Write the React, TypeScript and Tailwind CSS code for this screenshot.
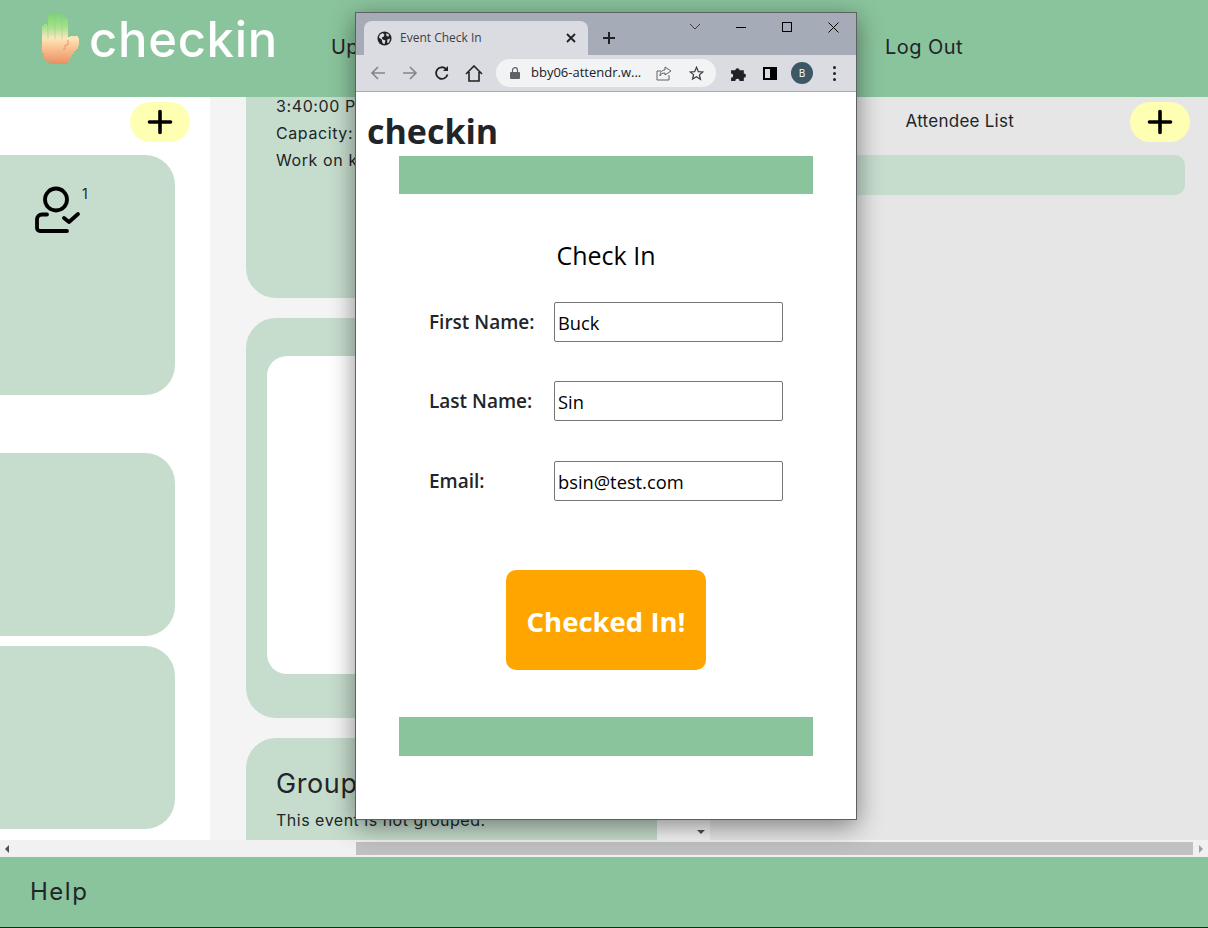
import React from "react";
import { Plus } from "lucide-react";

function HandLogo() {
  return (
    <svg width="40" height="55" viewBox="0 0 40 55" className="shrink-0">
      <defs>
        <linearGradient id="handFade" x1="0" y1="0" x2="0" y2="1">
          <stop offset="0" stopColor="#74d470" />
          <stop offset="0.3" stopColor="#a9e18d" />
          <stop offset="0.5" stopColor="#fbe6bc" />
          <stop offset="0.65" stopColor="#fccb9a" />
          <stop offset="1" stopColor="#e98f62" />
        </linearGradient>
      </defs>
      <path
        d="M1 15h2v-2h3v2h1V5h2V3h4v2h1V3h2V1h3v2h2v3h1V6h4v2h1v18h2v-1h8v2h1v8h-1v3h-2v2h-2v3h-2v3h-2v4h-2v3H8v-2H5v-3H3v-6H1z"
        fill="url(#handFade)"
      />
      <path d="M7 16v12M14 6v22M21 6v22" stroke="#8ac49c" strokeOpacity="0.4" />
      <path d="M27 29v5h-3v4h-2" fill="none" stroke="#e59a6c" />
    </svg>
  );
}

function AddButton() {
  return (
    <div className="flex h-10 w-[60px] items-center justify-center rounded-[20px] bg-[#ffffb3]">
      <Plus size={36} strokeWidth={2.4} className="text-black" />
    </div>
  );
}

function AttendeeIcon() {
  return (
    <svg width="52" height="52" viewBox="0 0 52 52" fill="none" stroke="#000" strokeWidth="3.800" strokeLinecap="round" strokeLinejoin="round" className="shrink-0">
      <circle cx="26" cy="14.500" r="11" />
      <path d="M17 29.500H12a5 5 0 0 0-5 5V43a3 3 0 0 0 3 3h27" />
      <path d="M34 33l5 4 9-8" />
    </svg>
  );
}

function Field({ label, value, className }: { label: string; value: string; className: string }) {
  return (
    <div className={`flex items-center ${className}`}>
      <label className="w-[155px] shrink-0 pl-[30px] pt-px text-[19px] font-semibold whitespace-nowrap text-[#212529]">{label}</label>
      <input
        readOnly
        value={value}
        className="h-10 w-[229px] rounded-[2px] border border-[#767676] bg-white px-[3px] text-[18.3px] text-black outline-none"
      />
    </div>
  );
}

function CheckInPopup() {
  return (
    <div className="absolute left-[355px] top-3 h-[808px] w-[502px] overflow-hidden border border-[#5f6062] bg-white font-['Open_Sans',sans-serif] shadow-[0_6px_24px_rgba(0,0,0,0.45)]">
      {/* tab strip */}
      <div className="relative flex h-[42px] bg-[#a6abb8] pl-2 pt-2">
        <div className="flex h-[34px] w-[224px] items-center rounded-t-lg bg-[#dadce2] pl-[13px] pr-3">
          <svg width="15" height="15" viewBox="0 0 16 16" className="shrink-0">
            <circle cx="8" cy="8" r="7.5" fill="#202124" />
            <path d="M3 4l3-2 2 2-1 2-2 1 1 2 3 1-1 4-2-1-1-4-3-2zM10 2l3 2-1 2-2-1zM11 9l3-1-1 4-2 1z" fill="#dadce2" />
          </svg>
          <span className="ml-2 text-xs text-[#3c4043]">Event Check In</span>
          <svg width="10" height="10" viewBox="0 0 10 10" className="ml-auto">
            <path d="M1 1l8 8M9 1l-8 8" stroke="#202124" strokeWidth="1.8" />
          </svg>
        </div>
        <svg width="14" height="14" viewBox="0 0 14 14" className="ml-[14px] mt-[10px]">
          <path d="M7 1v12M1 7h12" stroke="#202124" strokeWidth="2" />
        </svg>
        <div className="absolute right-0 top-0 flex items-center">
          <svg width="12" height="8" viewBox="0 0 12 8" className="mr-[17px]">
            <path d="M1 1l5 5 5-5" fill="none" stroke="#3c4043" />
          </svg>
          <div className="flex h-7 w-[46px] items-center justify-center">
            <div className="h-px w-[10px] bg-black" />
          </div>
          <div className="flex h-7 w-[46px] items-center justify-center">
            <div className="size-[10px] border border-black" />
          </div>
          <div className="flex h-7 w-[46px] items-center justify-center">
            <svg width="11" height="11" viewBox="0 0 11 11">
              <path d="M.5.5l10 10M10.500.5l-10 10" stroke="#000" />
            </svg>
          </div>
        </div>
      </div>
      {/* toolbar */}
      <div className="flex h-[37px] items-center border-b border-[#a9abb0] bg-[#dadce2] pl-[14px]">
        <svg width="16" height="16" viewBox="0 0 16 16" fill="none" stroke="#80868b" strokeWidth="1.6">
          <path d="M15 8H2M8 2L2 8l6 6" />
        </svg>
        <svg width="16" height="16" viewBox="0 0 16 16" fill="none" stroke="#80868b" strokeWidth="1.6" className="ml-4">
          <path d="M1 8h13M8 2l6 6-6 6" />
        </svg>
        <svg width="16" height="16" viewBox="0 0 16 16" fill="none" stroke="#202124" strokeWidth="1.8" className="ml-4">
          <path d="M13.500 9.500A5.800 5.800 0 1 1 12 4" />
          <path d="M14 1v5H9" fill="#202124" stroke="none" />
        </svg>
        <svg width="18" height="17" viewBox="0 0 18 17" fill="none" stroke="#202124" strokeWidth="1.6" className="ml-[15px]">
          <path d="M1 9l8-8 8 8M4 7v9h10V7" />
        </svg>
        <div className="ml-[13px] flex h-7 w-[220px] items-center rounded-full bg-[#f1f3f4] pl-[14px]">
          <svg width="10" height="12" viewBox="0 0 10 12" className="shrink-0">
            <rect y="5" width="10" height="7" rx="1" fill="#5f6368" />
            <path d="M2.500 5V3.200a2.500 2.500 0 0 1 5 0V5" fill="none" stroke="#5f6368" strokeWidth="1.200" />
          </svg>
          <span className="ml-[11px] text-[13px] text-[#202124]">bby06-attendr.w...</span>
          <svg width="16" height="15" viewBox="0 0 16 15" fill="none" stroke="#5f6368" className="ml-[15px] shrink-0">
            <path d="M13 9v5H1V5h4M9 1l6 4-6 4V7c-3 0-4 1-5 3 0-4 2-6 5-6z" />
          </svg>
          <svg width="15" height="15" viewBox="0 0 24 24" fill="none" stroke="#3c4043" strokeWidth="2" className="ml-[17px] shrink-0">
            <path d="M12 2l3 7 7 .6-5.300 4.600 1.600 7L12 17l-6.300 3.800 1.600-7L2 9.600 9 9z" />
          </svg>
        </div>
        <svg width="17" height="17" viewBox="0 0 16 16" className="ml-[14px]" fill="#202124">
          <path d="M1 5h4a2 2 0 1 1 4 0h4v3a2 2 0 1 1 0 4v3H9a2 2 0 1 0-4 0H1v-3a2 2 0 1 0 0-4z" />
        </svg>
        <div className="ml-[16px] flex h-[13px] w-[14px] justify-end border-2 border-black">
          <div className="h-full w-[5px] bg-black" />
        </div>
        <div className="ml-[14px] flex size-[22px] items-center justify-center rounded-full bg-[#3c5866] text-[10px] text-white">
          B
        </div>
        <div className="ml-[20px] flex flex-col gap-[3px]">
          <div className="size-[3px] rounded-full bg-[#202124]" />
          <div className="size-[3px] rounded-full bg-[#202124]" />
          <div className="size-[3px] rounded-full bg-[#202124]" />
        </div>
      </div>
      {/* page */}
      <div className="px-[11px] pb-[2px] pt-[17px]">
        <h1 className="text-[34px] leading-[45px] font-bold text-[#212529]">checkin</h1>
      </div>
      <div className="mx-[43px] h-[38px] bg-[#8ac49c]" />
      <h2 className="mt-[45px] pb-px text-center text-[25px] leading-[32px] text-black">Check In</h2>
      <div className="mx-[43px]">
        <Field label="First Name:" value="Buck" className="mt-[30px]" />
        <Field label="Last Name:" value="Sin" className="mt-[39px]" />
        <Field label="Email:" value="bsin@test.com" className="mt-[40px]" />
      </div>
      <div className="mt-[69px] flex justify-center">
        <button className="h-[100px] w-[200px] rounded-[10px] bg-[#ffa500] pt-[3px] text-[27.5px] font-bold text-white">
          Checked In!
        </button>
      </div>
      <div className="mx-[43px] mt-[47px] h-[39px] bg-[#8ac49c]" />
    </div>
  );
}

export default function App() {
  return (
    <div className="relative flex h-[928px] w-[1208px] flex-col overflow-hidden bg-white font-['Inter',sans-serif] text-[#212529]">
      <header className="flex h-[97px] shrink-0 bg-[#8ac49c]">
        <div className="ml-[41px] mt-[11px] flex items-start">
          <HandLogo />
          <span className="ml-[8px] mt-[1px] text-[49px] leading-[56px] font-medium tracking-[0.7px] text-white">checkin</span>
        </div>
        <nav className="mt-[35px] flex flex-1 text-xl leading-6 tracking-[0.45px] text-[#212529]">
          <span className="ml-[53px]">Upcoming Events</span>
          <span className="ml-auto mr-[245px]">Log Out</span>
        </nav>
      </header>

      <main className="flex min-h-0 flex-1">
        <section className="flex w-[210px] shrink-0 flex-col bg-white pr-[35px]">
          <div className="mr-[-15px] mt-[5px] flex justify-end">
            <AddButton />
          </div>
          <div className="mt-[13px] flex h-[240px] rounded-r-[30px] bg-[#c6ddcd] pl-[30px] pt-[30px]">
            <AttendeeIcon />
            <span className="mt-[-1px] text-sm">1</span>
          </div>
          <div className="mt-[58px] h-[183px] rounded-r-[30px] bg-[#c6ddcd]" />
          <div className="mt-[10px] h-[183px] rounded-r-[30px] bg-[#c6ddcd]" />
        </section>

        <section className="flex w-[500px] shrink-0 overflow-hidden bg-[#f4f4f4] pl-9">
          <div className="flex w-[411px] shrink-0 flex-col gap-5">
            <div className="h-[201px] shrink-0 overflow-hidden rounded-b-[30px] bg-[#c6ddcd] pl-[30px] text-base leading-[27px] tracking-[0.6px]">
              <p className="-mt-1">3:40:00 PM</p>
              <p>Capacity: 5</p>
              <p>Work on k</p>
            </div>
            <div className="h-[400px] shrink-0 rounded-[30px] bg-[#c6ddcd] px-[21px] pb-11 pt-[38px]">
              <div className="h-full rounded-[20px] bg-white" />
            </div>
            <div className="h-[200px] shrink-0 rounded-t-[30px] bg-[#c6ddcd] pl-[30px] pt-[28px]">
              <h3 className="text-[27px] leading-[36px] tracking-[0.6px]">Group</h3>
              <p className="mt-2 text-base leading-[20px] tracking-[0.5px]">This event is not grouped.</p>
            </div>
          </div>
          <div className="flex flex-1 items-end justify-end pb-[6px] pr-[5px]">
            <div className="h-0 w-0 border-x-[4px] border-t-[4px] border-x-transparent border-t-[#505050]" />
          </div>
        </section>

        <section className="min-w-0 flex-1 bg-[#e6e6e6] pr-[23px]">
          <div className="mr-[-5px] mt-[5px] flex items-center justify-end">
            <span className="mr-[116px] text-[17px] tracking-[0.25px]">Attendee List</span>
            <AddButton />
          </div>
          <div className="mt-[13px] h-10 rounded-r-[10px] bg-[#c6ddcd]" />
        </section>
      </main>

      {/* horizontal scrollbar */}
      <div className="flex h-[17px] shrink-0 items-center bg-[#f1f1f1]">
        <div className="ml-[5px] h-0 w-0 border-y-[4px] border-r-[4px] border-y-transparent border-r-[#505050]" />
        <div className="ml-[347px] h-[13px] w-[837px] bg-[#c1c1c1]" />
        <div className="ml-[6px] h-0 w-0 border-y-[4px] border-l-[4px] border-y-transparent border-l-[#a0a0a0]" />
      </div>

      <footer className="flex h-[71px] shrink-0 items-center border-b border-[#222] bg-[#8ac49c] pl-[30px] text-2xl tracking-[1.5px]">
        Help
      </footer>

      <CheckInPopup />
    </div>
  );
}
